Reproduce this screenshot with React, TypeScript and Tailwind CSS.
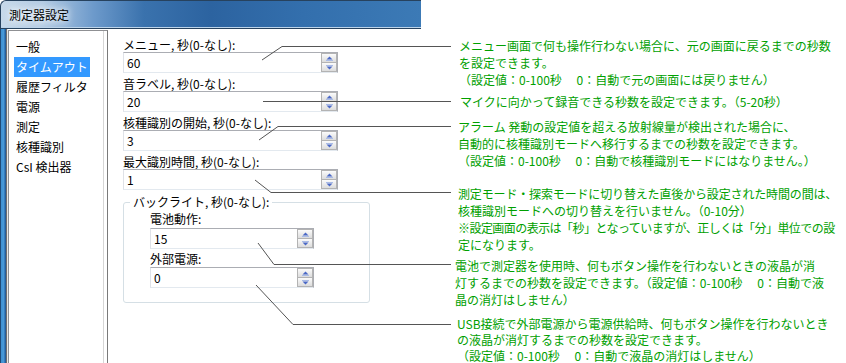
import { ReactNode } from 'react'

const menuItems = ['一般', 'タイムアウト', '履歴フィルタ', '電源', '測定', '核種識別', 'CsI 検出器']

// leader lines from each field to its note
const leaders = [
  '262,60 282,46.5 451,46.5',
  '263,101.5 451,101.5',
  '259,140 278,126.5 451,126.5',
  '255,180 271,192.5 451,192.5',
  '258,243 274,264.5 451,264.5',
  '256,285 293,324.5 451,324.5',
]

function Arrow({ down }: { down?: boolean }) {
  return (
    <svg width="7" height="5" viewBox="0 0 7 5">
      {down ? (
        <>
          <rect x="0" y="0" width="7" height="1" fill="#a9bbe6" />
          <polygon points="0.5,1.5 6.5,1.5 3.5,4.5" fill="#4a68c6" />
        </>
      ) : (
        <>
          <polygon points="3.5,0.5 6.5,3.5 0.5,3.5" fill="#4a68c6" />
          <rect x="0" y="4" width="7" height="1" fill="#a9bbe6" />
        </>
      )}
    </svg>
  )
}

function SpinBox({ value, width }: { value: string; width: string }) {
  return (
    <div className={`flex h-[21px] ${width} border border-[#abadb3] border-l-[#dfe2e8] border-b-[#e3e9ef] bg-white`}>
      <div className="flex-1 pl-[3px] text-[12px] leading-[19px] text-black">{value}</div>
      <div className="flex w-[16px] flex-col gap-[1px] bg-[#b3b3b3] p-[1px]">
        <div className="flex h-[8px] items-center justify-center bg-[linear-gradient(#fbfbfb,#dcdcdc)]">
          <Arrow />
        </div>
        <div className="flex h-[8px] items-center justify-center bg-[linear-gradient(#fbfbfb,#dcdcdc)]">
          <Arrow down />
        </div>
      </div>
    </div>
  )
}

function Field({ label, value }: { label: string; value: string }) {
  return (
    <div className="mb-[4px]">
      <div className="h-[14px] text-[12px] leading-[14px] text-black">{label}</div>
      <SpinBox value={value} width="w-[215px]" />
    </div>
  )
}

function Note({ className, children }: { className: string; children: ReactNode }) {
  return <div className={`text-[12px] whitespace-nowrap text-[#00a000] ${className}`}>{children}</div>
}

export default function App() {
  return (
    <div className="relative flex h-[363px] w-[846px] overflow-hidden bg-white font-['Noto_Sans_CJK_JP','Noto_Sans',sans-serif]">
      {/* Dialog window */}
      <div className="flex w-[421px] flex-none flex-col">
        <div className="h-[29px] rounded-tl-[6px] border-t border-l border-b border-[#27425e] bg-[linear-gradient(90deg,#c7d9ea_0%,#b3cbe3_10%,#6d9acb_22%,#3a72ad_34%,#2c63a0_50%,#336fad_72%,#3c7ab6_100%)] shadow-[inset_0_-1px_0_#bcd4ea]">
          <div className="pl-[8px] text-[12px] leading-[27px] text-black [text-shadow:0_0_6px_#fff,0_0_10px_#fff]">
            測定器設定
          </div>
        </div>

        <div className="flex flex-1">
          {/* left frame */}
          <div className="w-[8px] flex-none bg-[linear-gradient(90deg,#1e4a76_0,#1e4a76_1px,#3d8fd2_1px,#4b9bd8_4px,#245f9e_5px,#245f9e_6px,#6d6d6d_6px,#6d6d6d_7px,#e6e6e6_7px)]" />

          {/* category list */}
          <div className="pt-[1px]">
            <div className="h-[340px] w-[100px] border border-[#8f9093] border-r-[#7a7a7a] bg-white pt-[2px] pl-[5px] shadow-[inset_-3px_0_0_#fff,inset_-4px_0_0_#d6d6d6]">
              {menuItems.map((item, i) => (
                <div key={item} className="h-[20px]">
                  <span
                    className={
                      i === 1
                        ? 'inline-block bg-[#3399ff] px-[2px] text-[12px] leading-[20px] text-white'
                        : 'inline-block px-[2px] text-[12px] leading-[20px] text-black'
                    }
                  >
                    {item}
                  </span>
                </div>
              ))}
            </div>
          </div>

          {/* settings form */}
          <div className="flex-1 pt-[9px] pl-[15px]">
            <Field label="メニュー, 秒(0-なし):" value="60" />
            <Field label="音ラベル, 秒(0-なし):" value="20" />
            <Field label="核種識別の開始, 秒(0-なし):" value="3" />
            <Field label="最大識別時間, 秒(0-なし):" value="1" />

            <fieldset className="mt-[4px] w-[247px] rounded-[3px] border border-[#d5dfe5]">
              <legend className="ml-[6px] px-[3px] text-[12px] leading-[16px] text-black">バックライト, 秒(0-なし):</legend>
              <div className="pt-[2px] pb-[14px] pl-[26px]">
                <div className="mb-[2px] h-[14px] text-[12px] leading-[14px] text-black">電池動作:</div>
                <SpinBox value="15" width="w-[164px]" />
                <div className="mt-[3px] mb-[1px] h-[14px] text-[12px] leading-[14px] text-black">外部電源:</div>
                <SpinBox value="0" width="w-[164px]" />
              </div>
            </fieldset>
          </div>
        </div>
      </div>

      {/* Notes */}
      <div className="flex-1 pl-[36px]">
        <Note className="mt-[37px] ml-[2px] leading-[17px]">
          <div>メニュー画面で何も操作行わない場合に、元の画面に戻るまでの秒数</div>
          <div>を設定できます。</div>
          <div>（設定値：0-100秒　 0：自動で元の画面には戻りません）</div>
        </Note>
        <Note className="mt-[5px] ml-[3px] leading-[17px]">
          <div>マイクに向かって録音できる秒数を設定できます。（5-20秒）</div>
        </Note>
        <Note className="mt-[8px] ml-[1px] leading-[17px]">
          <div>アラーム 発動の設定値を超える放射線量が検出された場合に、</div>
          <div>自動的に核種識別モードへ移行するまでの秒数を設定できます。</div>
          <div>（設定値：0-100秒　 0：自動で核種識別モードにはなりません。）</div>
        </Note>
        <Note className="mt-[16px] ml-[1px] leading-[17px]">
          <div className="tracking-[-0.15px]">測定モード・探索モードに切り替えた直後から設定された時間の間は、</div>
          <div>核種識別モードへの切り替えを行いません。（0-10分）</div>
          <div className="tracking-[-0.55px]">※設定画面の表示は「秒」となっていますが、正しくは「分」単位での設</div>
          <div>定になります。</div>
        </Note>
        <Note className="mt-[4px] ml-[-2px] leading-[17px]">
          <div>電池で測定器を使用時、何もボタン操作を行わないときの液晶が消</div>
          <div>灯するまでの秒数を設定できます。（設定値：0-100秒　 0：自動で液</div>
          <div>晶の消灯はしません）</div>
        </Note>
        <Note className="mt-[8px] leading-[16px]">
          <div>USB接続で外部電源から電源供給時、何もボタン操作を行わないとき</div>
          <div>の液晶が消灯するまでの秒数を設定できます。</div>
          <div>（設定値：0-100秒　 0：自動で液晶の消灯はしません）</div>
        </Note>
      </div>

      <svg className="pointer-events-none absolute inset-0" width="846" height="363" viewBox="0 0 846 363">
        {leaders.map((pts) => (
          <polyline key={pts} points={pts} fill="none" stroke="#555" strokeWidth="1" />
        ))}
      </svg>
    </div>
  )
}
